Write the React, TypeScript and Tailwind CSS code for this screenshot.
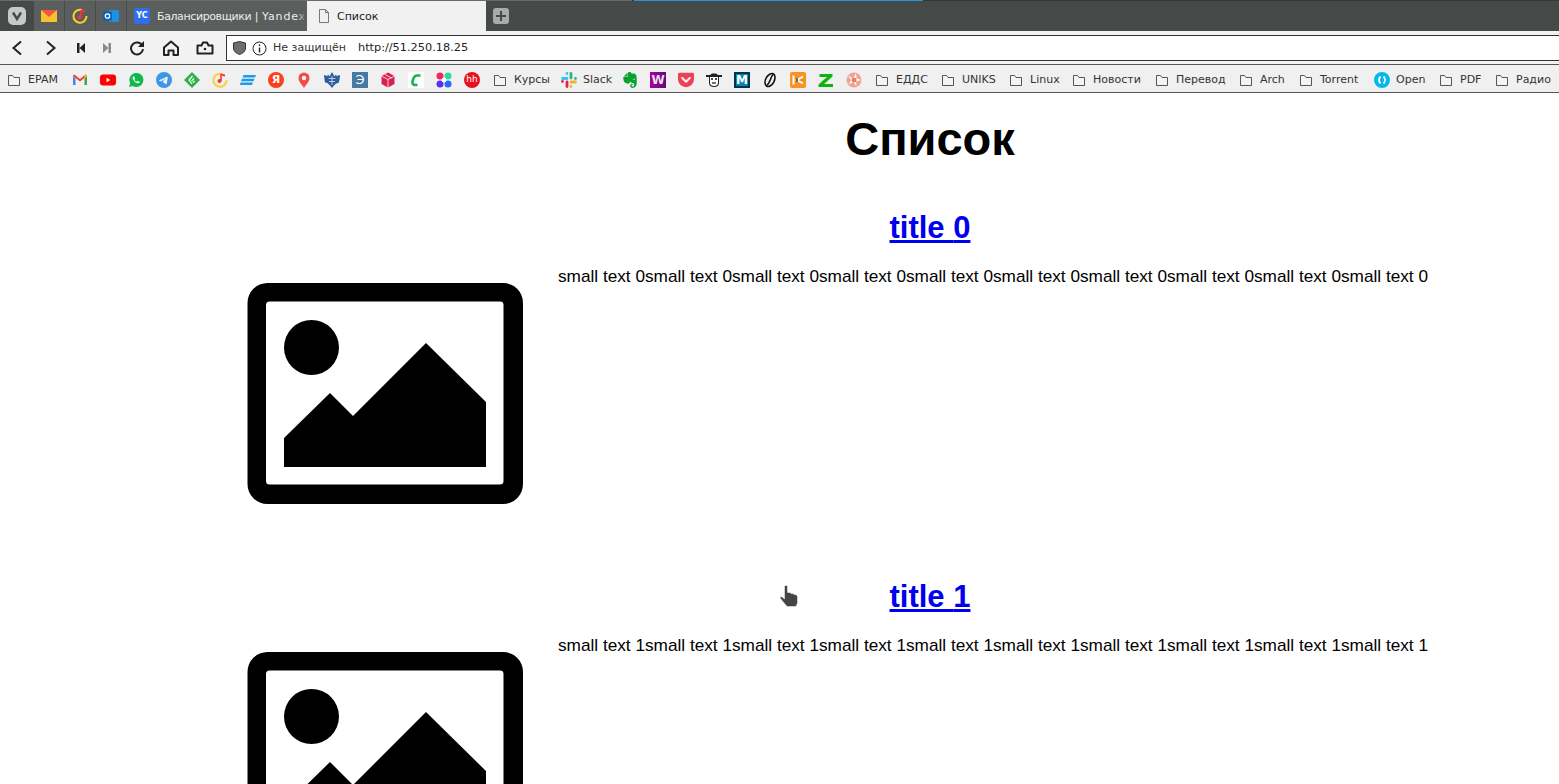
import React from "react";
import { SiTelegram, SiEvernote, SiPocket } from "react-icons/si";

const Folder = () => (
  <svg width="16" height="16" viewBox="0 0 16 16" fill="none" stroke="#555" strokeWidth="1">
    <path d="M2.500 3.500h4l1.500 2h5.500v8h-11z" fill="#f4f4f4" />
  </svg>
);

const Box = ({ children }: { children: React.ReactNode }) => (
  <span className="relative flex h-4 w-4 shrink-0 items-center justify-center overflow-hidden">{children}</span>
);

const Gmail = () => (
  <svg width="16" height="16" viewBox="0 0 16 16">
    <path d="M1 4v9h2.500V6.500z" fill="#4285f4" />
    <path d="M15 4v9h-2.500V6.500z" fill="#34a853" />
    <path d="M1 4c0-1 1-1.500 2-1l5 4 5-4c1-.5 2 0 2 1L8 9.500z" fill="#ea4335" />
    <path d="M12.500 3.500l.5-.5c1-.5 2 0 2 1l-2.500 2.500z" fill="#fbbc04" />
  </svg>
);
const YouTube = () => (
  <svg width="16" height="16" viewBox="0 0 16 16">
    <rect y="2.500" width="16" height="11" rx="3" fill="#f00" />
    <path d="M6.500 5.800v4.400L10.300 8z" fill="#fff" />
  </svg>
);
const WhatsApp = () => (
  <svg width="16" height="16" viewBox="0 0 16 16">
    <path d="M1 15l1.200-3.700A7 7 0 1 1 4.800 14z" fill="#0fb84a" />
    <path d="M5.500 4.200c-1 .8-1.200 2-.3 3.500 1 1.700 2.500 3 4.200 3.500 1.200.3 2.200-.2 2.600-1.300l-2-1.200-1 .8C7.900 9.900 6.800 8.800 6.300 7.700l.8-1-1-2.500z" fill="#fff" />
  </svg>
);
const Feedly = () => (
  <svg width="16" height="16" viewBox="0 0 16 16">
    <path d="M8 0l8 8-8 8-8-8z" fill="#2bb24c" />
    <path d="M8.500 4L5 8l3 4M10 6.500L7.500 9M10.500 9L9 10.500" stroke="#fff" strokeWidth="1.200" fill="none" />
  </svg>
);
const Music = () => (
  <svg width="16" height="16" viewBox="0 0 16 16" fill="none">
    <path d="M10 2A6.500 6.500 0 1 0 14.500 8" stroke="#fc3" strokeWidth="2" />
    <path d="M9 2v7" stroke="#f33" strokeWidth="1.600" />
    <circle cx="7.500" cy="9" r="2" fill="#f33" />
    <path d="M9 1.500l4 1v2l-4-1z" fill="#f33" />
  </svg>
);
const Stripes = () => (
  <svg width="16" height="16" viewBox="0 0 16 16" fill="#1e9be8">
    <path d="M3.500 3H16l-1 2.500H2.500zM2 6.700h12.500l-1 2.500H1zM.5 10.500H13L12 13H0z" />
  </svg>
);
const Yandex = () => (
  <span className="flex h-4 w-4 items-center justify-center rounded-full bg-[#fc3f1d] text-[11px] font-bold leading-none text-white">Я</span>
);
const Pin = () => (
  <svg width="16" height="16" viewBox="0 0 16 16">
    <path d="M8 16C6 12.500 2.500 10 2.500 6a5.500 5.500 0 0 1 11 0c0 4-3.500 6.500-5.500 10z" fill="#f44c4c" />
    <circle cx="8" cy="6" r="2.200" fill="#fff" />
  </svg>
);
const Eagle = () => (
  <svg width="16" height="16" viewBox="0 0 16 16">
    <path d="M0 3l2 .5 1 1 1-2 1.500 2L8 0l2.500 4.500L12 2.500l1 2 1-1 2-.5-.5 5-1 3-2.500.5L10 13.500 8 16l-2-2.500L3.500 11 1 10.500l-.5-3z" fill="#2a5c9e" />
    <path d="M8 4v9M4.500 6.500h7M5 9.500h6" stroke="#dce6f2" strokeWidth=".8" />
  </svg>
);
const E = () => (
  <span className="flex h-4 w-4 items-center justify-center bg-[#457aa3] text-[13px] leading-none text-white">Э</span>
);
const Cube = () => (
  <svg width="16" height="16" viewBox="0 0 16 16">
    <path d="M8 .5l6.500 3.500v8L8 15.500 1.500 12V4z" fill="#d9214d" />
    <path d="M1.500 4L8 7.500 14.500 4M8 7.500v8M5 2.500l6.500 3.500" stroke="#fff" strokeWidth=".8" fill="none" />
  </svg>
);
const CIcon = () => (
  <svg width="16" height="16" viewBox="0 0 16 16">
    <rect width="16" height="16" fill="#fff" />
    <path d="M12.500 3.500H9C6.500 3.500 5 7 4.500 9.500 4.200 11.500 5 13 7 13h2.500" stroke="#13b34f" strokeWidth="2.600" fill="none" />
  </svg>
);
const Dots = () => (
  <svg width="16" height="16" viewBox="0 0 16 16">
    <circle cx="4" cy="4" r="3.500" fill="#f0265f" />
    <circle cx="12" cy="4" r="3.500" fill="#35d6a0" />
    <circle cx="4" cy="12" r="3.500" fill="#5a2df0" />
    <circle cx="12" cy="12" r="3.500" fill="#1f6df2" />
    <rect x="6" y="6" width="4" height="4" fill="#fff" />
  </svg>
);
const HH = () => (
  <span className="flex h-4 w-4 items-center justify-center rounded-full bg-[#e8101e] text-[9px] leading-none text-white">hh</span>
);
const Slack = () => (
  <svg width="16" height="16" viewBox="0 0 16 16" strokeWidth="2.800" strokeLinecap="round" fill="none">
    <path d="M1.500 6.500H6M6 1.500v.1" stroke="#36c5f0" />
    <path d="M10 1.500V6M14.500 6.500v.1" stroke="#2eb67d" />
    <path d="M10 10h4.500M10 14.500v-.1" stroke="#ecb22e" />
    <path d="M6 10v4.500M1.500 9.500v.1" stroke="#e01e5a" />
  </svg>
);
const Wm = () => (
  <span className="flex h-4 w-4 items-center justify-center bg-gradient-to-r from-[#a5009a] to-[#5c0a7a] text-[12px] font-bold leading-none text-[#f5d9f0]">W</span>
);
const Cow = () => (
  <svg width="16" height="16" viewBox="0 0 16 16">
    <path d="M0 3h4l2-1.500h4L12 3h4v2h-3v6c0 2.500-2 4-5 4s-5-1.500-5-4V5H0z" fill="#222" />
    <path d="M4 5h8v6c0 2-2 3-4 3s-4-1-4-3z" fill="#fff" />
    <circle cx="6" cy="7" r="1" fill="#111" />
    <circle cx="10" cy="7" r="1" fill="#111" />
    <path d="M6 11h4" stroke="#111" strokeWidth="1.200" />
  </svg>
);
const MIcon = () => (
  <span className="flex h-4 w-4 items-center justify-center border-2 border-[#03354f] bg-[#0a84ad] text-[12px] font-bold leading-none text-white">М</span>
);
const Bean = () => (
  <svg width="16" height="16" viewBox="0 0 16 16" fill="none" stroke="#111" strokeWidth="1.600">
    <ellipse cx="8" cy="8" rx="4.300" ry="7" transform="rotate(28 8 8)" />
    <path d="M11 2.500C8 6 9 9 5 13.500" />
  </svg>
);
const KIcon = () => (
  <svg width="16" height="16" viewBox="0 0 16 16">
    <rect width="16" height="16" rx="2" fill="#f7931e" />
    <path d="M3.500 3.500v9" stroke="#fff" strokeWidth="2" />
    <path d="M13 4.500L7 8l6 3.500" stroke="#fff" strokeWidth="2" fill="none" />
    <path d="M6 6h2v4H6z" fill="#666" />
  </svg>
);
const ZIcon = () => (
  <svg width="16" height="16" viewBox="0 0 16 16">
    <path d="M1.500 2h13v2.500L6 12h9v3H.5v-2.500L9 5H1.500z" fill="#0cb40c" />
  </svg>
);
const Star = () => (
  <svg width="16" height="16" viewBox="0 0 16 16">
    <circle cx="8" cy="8" r="7.500" fill="#f3a294" />
    <path d="M2 3.500l5 3 3-5 .5 5L15 8l-5 1.500L10.500 14 7 10l-4 2.500L5 8z" fill="#fff" />
    <circle cx="8" cy="8" r="2.500" fill="#ec7f6c" />
  </svg>
);
const OpenIcon = () => (
  <svg width="16" height="16" viewBox="0 0 16 16" fill="none">
    <circle cx="8" cy="8" r="8" fill="#06b6ef" />
    <path d="M6.500 4.500C4.500 6.500 4.500 9.500 6.500 11.500M9.500 4.500C11.500 6.500 11.500 9.500 9.500 11.500" stroke="#fff" strokeWidth="1.800" />
  </svg>
);

type Mark = { icon: React.ReactNode; label?: string; width?: number };

const F = <Folder />;
const marks: Mark[] = [
  { icon: F, label: "EPAM", width: 32 },
  { icon: <Gmail /> },
  { icon: <YouTube /> },
  { icon: <WhatsApp /> },
  { icon: <SiTelegram className="h-4 w-4 text-[#3b97e8]" /> },
  { icon: <Feedly /> },
  { icon: <Music /> },
  { icon: <Stripes /> },
  { icon: <Yandex /> },
  { icon: <Pin /> },
  { icon: <Eagle /> },
  { icon: <E /> },
  { icon: <Cube /> },
  { icon: <CIcon /> },
  { icon: <Dots /> },
  { icon: <HH /> },
  { icon: F, label: "Курсы", width: 35 },
  { icon: <Slack />, label: "Slack", width: 27 },
  { icon: <SiEvernote className="h-4 w-4 text-[#0aa12f]" /> },
  { icon: <Wm /> },
  { icon: <SiPocket className="h-4 w-4 text-[#ef4056]" /> },
  { icon: <Cow /> },
  { icon: <MIcon /> },
  { icon: <Bean /> },
  { icon: <KIcon /> },
  { icon: <ZIcon /> },
  { icon: <Star /> },
  { icon: F, label: "ЕДДС", width: 32 },
  { icon: F, label: "UNIKS", width: 34 },
  { icon: F, label: "Linux", width: 29 },
  { icon: F, label: "Новости", width: 49 },
  { icon: F, label: "Перевод", width: 50 },
  { icon: F, label: "Arch", width: 26 },
  { icon: F, label: "Torrent", width: 42 },
  { icon: <OpenIcon />, label: "Open", width: 30 },
  { icon: F, label: "PDF", width: 22 },
  { icon: F, label: "Радио", width: 35 },
];

const Toolbtn = ({ w, children }: { w: string; children: React.ReactNode }) => (
  <div className={`flex items-center justify-center ${w}`}>{children}</div>
);

const Placeholder = () => (
  <svg className="mt-[17px] ml-[247px] shrink-0" width="276" height="221" viewBox="0 0 276 221">
    <path
      fillRule="evenodd"
      d="M20.500 0H256A20 20 0 0 1 276 20V201A20 20 0 0 1 256 221H20.500A20 20 0 0 1 .5 201V20A20 20 0 0 1 20.500 0ZM22.500 18.500A3.500 3.500 0 0 0 19 22V198A3.500 3.500 0 0 0 22.500 201.500H253A3.500 3.500 0 0 0 256.500 198V22A3.500 3.500 0 0 0 253 18.500Z"
    />
    <circle cx="64.500" cy="64.500" r="27.500" />
    <path d="M37 155L83 110L106 133L179 60L239 119V184H37Z" />
  </svg>
);

const Item = ({ n }: { n: number }) => (
  <section className="h-[369px] shrink-0">
    <h2 className="ml-[430px] w-[1000px] text-center text-[31px] font-bold leading-[30px]">
      <a href="#" className="text-[#0000ee] underline">title {n}</a>
    </h2>
    <div className="mt-[23px] flex items-start">
      <Placeholder />
      <p className="ml-[35px] whitespace-nowrap text-[17.220px] leading-[20px]">
        {Array.from({ length: 10 }, () => `small text ${n}`).join("")}
      </p>
    </div>
  </section>
);

export default function App() {
  return (
    <div className="relative flex h-[784px] w-[1559px] flex-col overflow-hidden bg-white font-['Liberation_Sans',sans-serif] text-black">
      {/* tab strip */}
      <div className="flex h-[31px] shrink-0 flex-col bg-[#454a48] font-['DejaVu_Sans',sans-serif] text-[11px]">
        <div className="flex h-px shrink-0 bg-[#33373a]">
          <div className="w-[632px] bg-[#6a6a6a]" />
          <div className="ml-[2px] w-[289px] bg-[#1f97db]" />
        </div>
        <div className="flex min-h-0 flex-1 items-stretch">
          <div className="flex w-[34px] items-center justify-center">
            <span className="flex h-[18px] w-[18px] items-center justify-center rounded-[5px] bg-[#c8c8c8]">
              <svg width="12" height="10" viewBox="0 0 12 10" fill="none"><path d="M2 1.500L6 8l4-6.500" stroke="#454a48" strokeWidth="2.400" /></svg>
            </span>
          </div>
          <div className="flex w-[31px] items-center justify-center border-r border-[#474b49] bg-[#5a5e5c]">
            <svg width="16" height="12" viewBox="0 0 16 12"><rect width="16" height="12" fill="#fbc02d" /><path d="M0 0h16L8 7z" fill="#ef5a3c" /></svg>
          </div>
          <div className="flex w-[31px] items-center justify-center border-r border-[#474b49] bg-[#5a5e5c]"><Music /></div>
          <div className="flex w-[31px] items-center justify-center border-r border-[#474b49] bg-[#5a5e5c]">
            <svg width="16" height="16" viewBox="0 0 16 16">
              <rect x="6" y="2" width="10" height="12" rx="1" fill="#1f8fe0" />
              <rect x="0" y="3.500" width="9" height="9" rx="1" fill="#0a64b4" />
              <circle cx="4.500" cy="8" r="2.200" fill="none" stroke="#fff" strokeWidth="1.300" />
            </svg>
          </div>
          <div className="relative flex w-[180px] items-center overflow-hidden bg-[#5a5e5c] pl-[7px] text-[#ededed]">
            <span className="flex h-4 w-4 shrink-0 items-center justify-center rounded-[3px] bg-[#2f6fed] text-[8px] font-bold leading-none text-white">YC</span>
            <span className="ml-[7px] whitespace-nowrap pt-[2px]">
              <span className="tracking-[-0.4px]">Балансировщики</span> | <span className="tracking-[0.8px]">Yandex</span>
            </span>
            <span className="absolute inset-y-0 right-0 w-[10px] bg-gradient-to-r from-transparent to-[#5a5e5c]" />
          </div>
          <div className="flex w-[179px] items-center bg-[#f1f1f1] pl-[9px] text-[#222]">
            <svg width="16" height="16" viewBox="0 0 16 16" fill="none" stroke="#777"><path d="M3.500 1.500h6l3 3v10h-9zM9.500 1.500v3h3" /></svg>
            <span className="ml-[5px] pt-[2px]">Список</span>
          </div>
          <div className="flex w-[30px] items-center justify-center">
            <span className="flex h-4 w-4 items-center justify-center rounded-[3px] bg-[#a9abaa]">
              <svg width="10" height="10" viewBox="0 0 10 10"><path d="M5 0v10M0 5h10" stroke="#454a48" strokeWidth="2" /></svg>
            </span>
          </div>
        </div>
      </div>

      {/* address bar */}
      <div className="flex h-[33px] shrink-0 items-center bg-[#f2f2f2] pb-[3px] pt-[4px]">
        <Toolbtn w="w-[34px]"><svg width="12" height="16" viewBox="0 0 12 16" fill="none" stroke="#222" strokeWidth="2"><path d="M10 1.500L2.500 8l7.500 6.500" /></svg></Toolbtn>
        <Toolbtn w="w-[34px]"><svg width="12" height="16" viewBox="0 0 12 16" fill="none" stroke="#222" strokeWidth="2"><path d="M2 1.500L9.500 8 2 14.500" /></svg></Toolbtn>
        <Toolbtn w="w-[26px]"><svg width="10" height="12" viewBox="0 0 10 12" fill="#222"><path d="M1 1h2.500v10H1zM3.500 6L9 1v10z" /></svg></Toolbtn>
        <Toolbtn w="w-[26px]"><svg width="10" height="12" viewBox="0 0 10 12" fill="#8a8a8a"><path d="M9 1H6.500v10H9zM6.500 6L1 1v10z" /></svg></Toolbtn>
        <Toolbtn w="w-[34px]"><svg width="16" height="16" viewBox="0 0 16 16" fill="none" stroke="#222" strokeWidth="2"><path d="M13.500 6A6 6 0 1 0 14 9" /><path d="M15 1v6H9z" fill="#222" stroke="none" /></svg></Toolbtn>
        <Toolbtn w="w-[34px]"><svg width="18" height="16" viewBox="0 0 18 16" fill="none" stroke="#222" strokeWidth="2" strokeLinejoin="round"><path d="M2 15V7.500L9 1.500l7 6V15h-4.500v-4.500h-5V15z" /></svg></Toolbtn>
        <Toolbtn w="w-[34px]"><svg width="18" height="14" viewBox="0 0 18 14" fill="none" stroke="#222" strokeWidth="2" strokeLinejoin="round"><path d="M1.500 4.500h4l1.500-3h4l1.500 3h4v8h-15z" /><circle cx="9" cy="8" r="1.300" fill="#222" stroke="none" /></svg></Toolbtn>
        <div className="ml-[4px] flex h-[26px] flex-1 items-center border border-r-0 border-[#333] bg-white pl-[6px] font-['DejaVu_Sans',sans-serif] text-[11px]">
          <svg width="13" height="14" viewBox="0 0 13 14"><path d="M.5 2L6.500.5 12.500 2v5c0 3.500-3 5.500-6 6.500-3-1-6-3-6-6.500z" fill="#6e6e6e" stroke="#333" /></svg>
          <svg className="ml-[6px]" width="15" height="15" viewBox="0 0 15 15" fill="none" stroke="#222"><circle cx="7.500" cy="7.500" r="6.500" /><path d="M7.500 6.500v5M7.500 3.500v1.500" strokeWidth="1.400" /></svg>
          <span className="ml-[6px] w-[85px] whitespace-nowrap pt-[1px] text-[#333]">Не защищён</span>
          <span className="whitespace-nowrap pt-[1px] text-[11.300px] text-[#222]">http://51.250.18.25</span>
        </div>
      </div>

      {/* bookmarks */}
      <div className="flex h-[29px] shrink-0 items-center gap-3 overflow-hidden border-y border-[#555] bg-[#f0f0f0] pl-[6px] pt-[2px] font-['DejaVu_Sans',sans-serif] text-[11px] text-[#333]">
        {marks.map((m, i) => (
          <div key={i} className="flex shrink-0 items-center gap-[6px]">
            <Box>{m.icon}</Box>
            {m.label && <span className="whitespace-nowrap pt-[2px]" style={{ width: m.width }}>{m.label}</span>}
          </div>
        ))}
      </div>

      {/* page */}
      <main className="min-h-0 flex-1 pt-[18px]">
        <h1 className="ml-[430px] w-[1000px] text-center text-[47px] font-bold leading-[56px]">Список</h1>
        <div className="mt-[46px]">
          <Item n={0} />
          <Item n={1} />
        </div>
      </main>

      {/* mouse pointer lies over the page */}
      <svg className="absolute left-[778px] top-[583px]" width="24" height="26" viewBox="0 0 24 26">
        <path d="M6.500 3.500c0-1.500 3-1.500 3 0V9.500h2.500l1 1 2 0 1 1 2 0 1.500 2v6.500l-1.500 3.500h-9L4 17.500l-2-2.500c0-1.200 1.500-1.500 2.500-.8l2 1.800z" fill="#444" stroke="#fff" strokeOpacity=".6" strokeWidth=".8" />
      </svg>
    </div>
  );
}
